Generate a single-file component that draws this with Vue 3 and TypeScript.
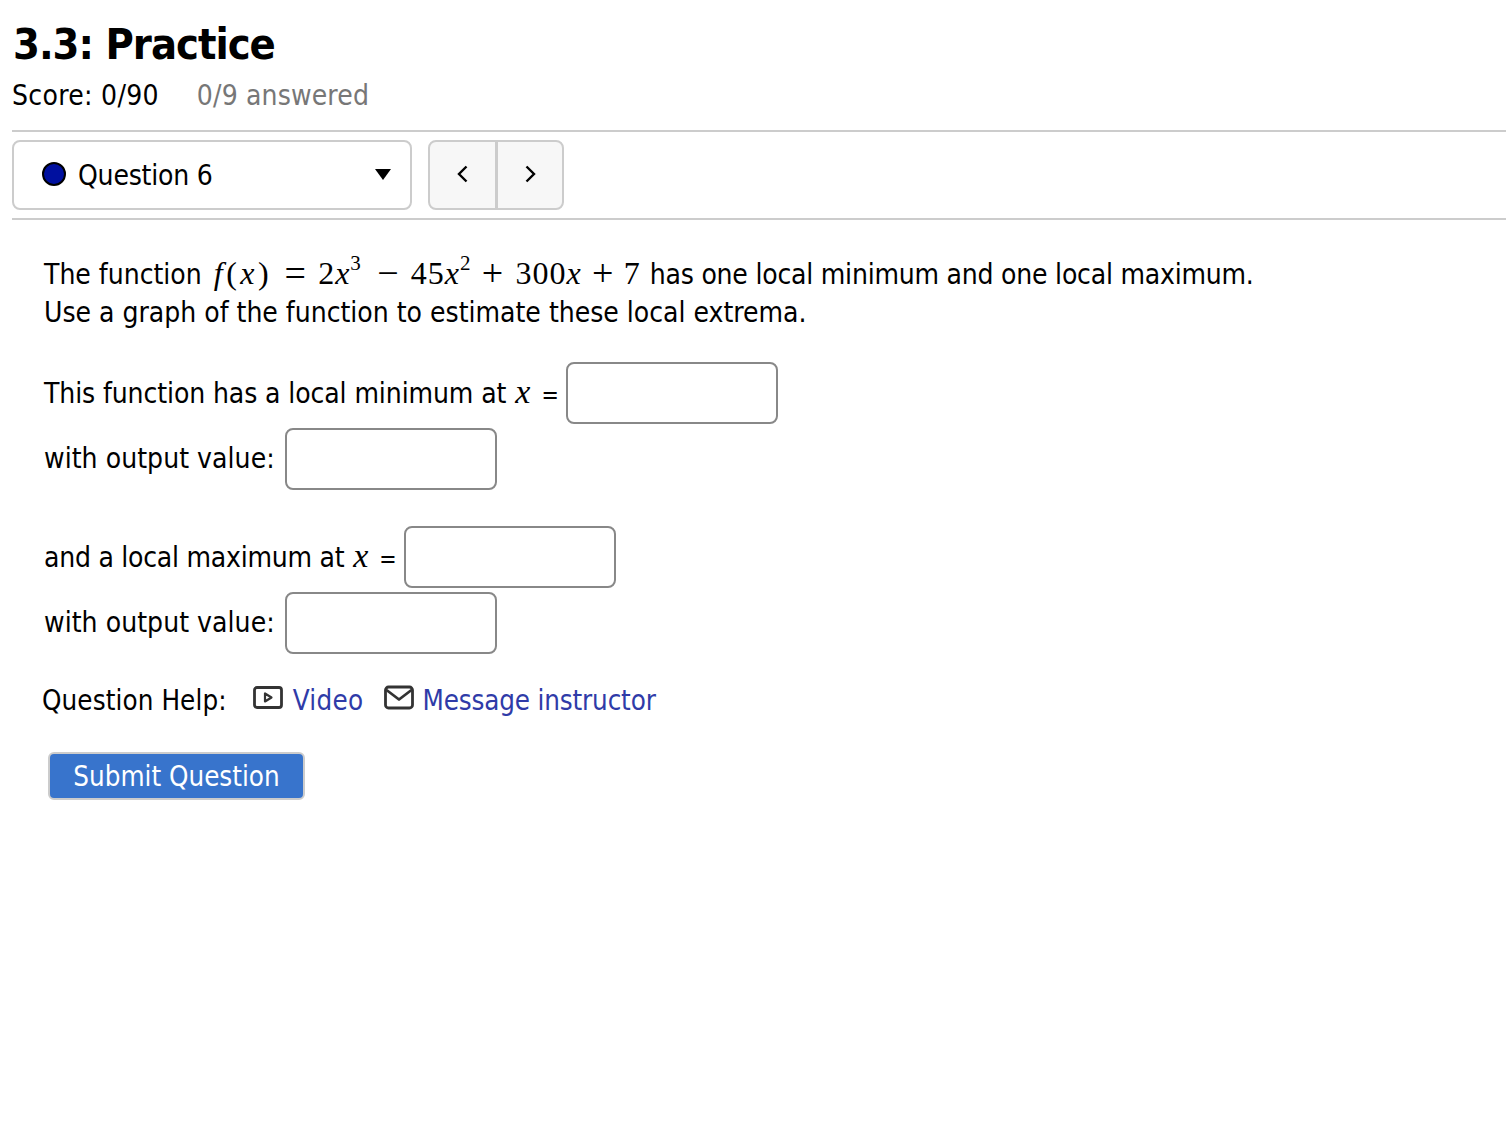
<template>
  <div class="page">
    <h1 class="title">3.3: Practice</h1>
    <div class="score-row">
      <span>Score: 0/90</span>
      <span class="answered">0/9 answered</span>
    </div>

    <div class="nav-bar">
      <div class="select-box">
        <span class="dot"></span>
        <span class="select-label">Question 6</span>
        <span class="caret"></span>
      </div>
      <div class="pager">
        <button class="pager-btn">
          <svg width="12" height="18" viewBox="0 0 12 18"><path d="M9.5 1.5 2 9l7.5 7.5" /></svg>
        </button>
        <button class="pager-btn">
          <svg width="12" height="18" viewBox="0 0 12 18"><path d="M2.5 1.5 10 9l-7.5 7.5" /></svg>
        </button>
      </div>
    </div>

    <div class="question">
      <p class="intro">
        The function
        <span class="math"><span class="fn"><i>f</i>(<i>x</i>)</span><span class="op">=</span>2<i>x</i><sup>3</sup><span class="op minus">−</span>45<i>x</i><sup>2</sup><span class="op plus">+</span>300<i>x</i><span class="op plus last">+</span>7</span>
        <span class="tail">has one local minimum and one local maximum.</span><br />
        Use a graph of the function to estimate these local extrema.
      </p>

      <div v-for="(group, i) in groups" :key="i" class="answer-group">
        <div class="answer-row">
          <span class="row-text"><span :class="group.cls">{{ group.label }}</span> <i class="math var">x</i><span class="eq">=</span></span>
          <input class="answer" type="text" />
        </div>
        <div class="answer-row">
          <span class="output-label">with output value:</span>
          <input class="answer" type="text" />
        </div>
      </div>
    </div>

    <div class="help">
      <span class="help-label">Question Help:</span>
      <a class="help-link video">
        <svg width="30" height="26" viewBox="0 0 30 26">
          <rect x="1.5" y="2.5" width="27" height="20" rx="2.5" class="icon-line" />
          <path d="M12 8.5v8l6.5-4z" class="icon-line thin" />
        </svg>
        Video
      </a>
      <a class="help-link message">
        <svg width="30" height="26" viewBox="0 0 30 26">
          <rect x="1.5" y="2" width="27" height="21" rx="3" class="icon-line" />
          <path d="M2.5 5l12.5 9.5L27.5 5" class="icon-line" />
        </svg>
        Message instructor
      </a>
    </div>

    <button class="submit">Submit Question</button>
  </div>
</template>

<script setup lang="ts">
const groups = [
  { label: 'This function has a local minimum at', cls: 'label-min' },
  { label: 'and a local maximum at', cls: 'label-max' },
]
</script>

<style>
body {
  background: #fff;
}
</style>

<style scoped>
.page {
  height: 1140px;
  box-sizing: border-box;
  padding: 19px 0 0 12px;
  font-family: "DejaVu Sans", sans-serif;
  font-stretch: condensed;
  font-size: 28px;
  color: #000;
  overflow: hidden;
}

.title {
  margin: 0 0 0 1px;
  font-size: 43px;
  line-height: 50px;
  font-weight: 700;
  letter-spacing: -1px;
}

.score-row {
  display: flex;
  gap: 38px;
  margin-top: 8px;
  line-height: 38px;
  padding-bottom: 15px;
  border-bottom: 2px solid #ccc;
  letter-spacing: 0.3px;
}

.answered {
  color: #777;
  letter-spacing: 0.15px;
}

.nav-bar {
  display: flex;
  gap: 16px;
  padding: 8px 0;
  border-bottom: 2px solid #ccc;
}

.select-box {
  width: 400px;
  height: 70px;
  box-sizing: border-box;
  display: flex;
  align-items: center;
  padding: 0 19px 0 28px;
  border: 2px solid #ccc;
  border-radius: 8px;
}

.dot {
  width: 24px;
  height: 24px;
  box-sizing: border-box;
  border-radius: 50%;
  background: #00109f;
  border: 2px solid #000;
  margin-right: 12px;
  margin-top: -3px;
}

.select-label {
  flex: 1;
  letter-spacing: -0.2px;
}

.caret {
  border-left: 8px solid transparent;
  border-right: 8px solid transparent;
  border-top: 11px solid #000;
  margin-top: -2px;
}

.pager {
  display: flex;
  height: 70px;
  box-sizing: border-box;
  border: 2px solid #ccc;
  border-radius: 8px;
  background: #f7f7f7;
}

.pager-btn {
  width: 65px;
  padding: 0 0 2px;
  border: 0;
  background: transparent;
  display: flex;
  align-items: center;
  justify-content: center;
}

.pager-btn + .pager-btn {
  border-left: 3px solid #ccc;
  width: 67px;
}

.pager-btn svg path {
  fill: none;
  stroke: #000;
  stroke-width: 2.4;
}

.question {
  padding: 34px 0 0 32px;
}

.intro {
  margin: 0;
  line-height: 38px;
}

.tail {
  margin-left: 9px;
  letter-spacing: -0.22px;
}

.math {
  font-family: "Liberation Serif", serif;
  font-stretch: normal;
  font-size: 32px;
  letter-spacing: 1px;
}

.fn {
  margin-left: 4px;
  letter-spacing: 3.5px;
}

.math sup {
  font-size: 21px;
  line-height: 0;
  vertical-align: 14px;
}

.op {
  display: inline-block;
  width: 22px;
  margin: 0 12px;
  text-align: center;
  font-size: 38px;
  line-height: 0;
  letter-spacing: 0;
  vertical-align: -2px;
}

.op.minus {
  margin: 0 12px 0 15px;
}

.op.plus {
  margin: 0 12px 0 10px;
}

.op.plus.last {
  margin: 0 10px 0 10px;
}

.var {
  font-size: 34px;
  letter-spacing: 0;
  margin-left: 1px;
}

.eq {
  font-size: 23px;
  margin-left: 11px;
  letter-spacing: 0;
}

.row-text {
  margin-right: -3px;
}

.label-min {
  letter-spacing: -0.1px;
}

.label-max {
  letter-spacing: -0.25px;
}

.output-label {
  letter-spacing: 0.05px;
}

.answer-group {
  margin-top: 30px;
}

.answer-group + .answer-group {
  margin-top: 36px;
}

.answer-row {
  display: flex;
  align-items: center;
  gap: 10px;
  height: 62px;
  margin-bottom: 4px;
}

.answer-row > span {
  margin-top: -2px;
}

.answer {
  width: 212px;
  height: 62px;
  box-sizing: border-box;
  border: 2px solid #888;
  border-radius: 8px;
  background: #fff;
}

.help {
  display: flex;
  align-items: center;
  margin: 27px 0 0 30px;
  line-height: 38px;
  font-size: 27.5px;
}

.help-label {
  margin-right: 26px;
  letter-spacing: 0.1px;
}

.help-link {
  display: flex;
  align-items: center;
  gap: 10px;
  color: #2f3ba8;
  margin-right: 21px;
}

.help-link.video {
  letter-spacing: 0.3px;
}

.help-link.message {
  gap: 8px;
  letter-spacing: -0.15px;
}

.help-link svg {
  margin-top: -4px;
}

.icon-line {
  fill: none;
  stroke: #333;
  stroke-width: 2.8;
  stroke-linejoin: round;
}

.icon-line.thin {
  stroke-width: 2.2;
}

.submit {
  display: block;
  width: 257px;
  height: 48px;
  margin: 33px 0 0 36px;
  padding: 0;
  border: 2px solid #ccc;
  border-radius: 6px;
  background: #3874cc;
  color: #fff;
  font: inherit;
  font-size: 27.5px;
  font-stretch: condensed;
}
</style>
